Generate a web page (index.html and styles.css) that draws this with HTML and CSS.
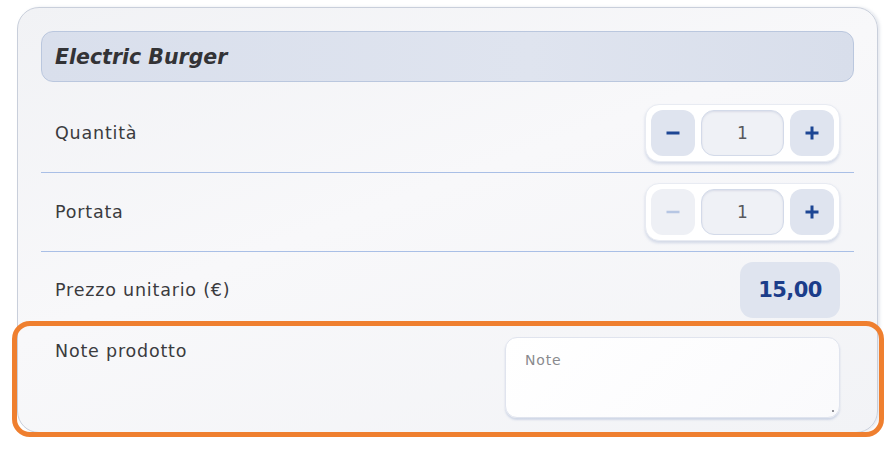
FILE: index.html
```html
<!DOCTYPE html>
<html lang="it">
<head>
<meta charset="utf-8">
<link rel="stylesheet" href="styles.css">
</head>
<body>
<div class="page">
  <div class="card">
    <div class="card-header">Electric Burger</div>
    <div class="row row-first">
      <span class="label">Quantità</span>
      <div class="stepper">
        <button class="step-btn"><svg width="16" height="16" viewBox="0 0 16 16"><path d="M1.5 8h13" stroke="#1d4694" stroke-width="3" stroke-linecap="butt"/></svg></button>
        <div class="step-value">1</div>
        <button class="step-btn"><svg width="16" height="16" viewBox="0 0 16 16"><path d="M1.5 8h13M8 1.5v13" stroke="#1d4694" stroke-width="3" stroke-linecap="butt"/></svg></button>
      </div>
    </div>
    <div class="row">
      <span class="label">Portata</span>
      <div class="stepper">
        <button class="step-btn disabled"><svg width="16" height="16" viewBox="0 0 16 16"><path d="M1.5 8h13" stroke="#b6c6e3" stroke-width="2.5" stroke-linecap="butt"/></svg></button>
        <div class="step-value">1</div>
        <button class="step-btn"><svg width="16" height="16" viewBox="0 0 16 16"><path d="M1.5 8h13M8 1.5v13" stroke="#1d4694" stroke-width="3" stroke-linecap="butt"/></svg></button>
      </div>
    </div>
    <div class="row row-last">
      <span class="label">Prezzo unitario (€)</span>
      <div class="price">15,00</div>
    </div>
    <div class="notes-row">
      <span class="label">Note prodotto</span>
      <div class="notes-box"><span class="placeholder">Note</span><span class="grip"></span></div>
    </div>
  </div>
  <div class="highlight"></div>
</div>
</body>
</html>
```
FILE: styles.css
```css
* { box-sizing: border-box; }
html, body { margin: 0; padding: 0; background: #ffffff; }
body {
  font-family: "DejaVu Sans", "Open Sans", sans-serif;
  color: #3a3a3d;
}
.page {
  position: relative;
  width: 896px;
  height: 450px;
  padding: 7px 18px 0 17px;
}
.card {
  width: 861px;
  height: 426px;
  border: 1px solid #c9cfdb;
  border-radius: 22px;
  padding: 23px 23px 0 23px;
  background: linear-gradient(160deg, #f1f2f5 0%, #f8f8fa 45%, #f2f3f6 100%);
  box-shadow: 2px 0 3px rgba(180,188,205,0.35);
}
.card-header {
  height: 51px;
  border: 1px solid #bac7de;
  border-radius: 12px;
  background: linear-gradient(90deg, #d9dfec 0%, #dfe4ef 60%, #d8deeb 100%);
  padding-left: 13px;
  display: flex;
  align-items: center;
  font-weight: 700;
  font-style: italic;
  font-size: 20.5px;
  color: #333336;
}
.row {
  display: flex;
  align-items: center;
  justify-content: space-between;
  padding: 10px 14px 10px 14px;
  border-bottom: 1px solid #a9bfe6;
}
.row-first { margin-top: 12px; }
.row-last { border-bottom: none; }
.label {
  font-size: 17.5px;
  letter-spacing: 0.8px;
  color: #3b3b3e;
}
.stepper {
  display: flex;
  gap: 6px;
  padding: 5px;
  background: #ffffff;
  border: 1px solid #e8ebf2;
  border-radius: 14px;
  box-shadow: 0 2px 3px rgba(120,140,185,0.28);
}
.step-btn {
  width: 44px;
  height: 46px;
  border: none;
  border-radius: 12px;
  background: #dfe4ef;
  display: flex;
  align-items: center;
  justify-content: center;
  padding: 0;
}
.step-btn.disabled { background: #eef0f5; }
.step-value {
  width: 83px;
  height: 46px;
  border: 1px solid #d3dae9;
  border-radius: 13px;
  background: #eff1f6;
  box-shadow: inset 0 1px 2px rgba(150,160,190,0.25);
  display: flex;
  align-items: center;
  justify-content: center;
  font-size: 17px;
  color: #58585c;
}
.price {
  width: 100px;
  height: 56px;
  border-radius: 13px;
  background: #dfe4ef;
  display: flex;
  align-items: center;
  justify-content: center;
  font-size: 21px;
  letter-spacing: -0.6px;
  font-weight: 700;
  color: #1b3d8a;
}
.notes-row {
  display: flex;
  justify-content: space-between;
  align-items: flex-start;
  padding: 9px 14px 0 14px;
}
.notes-row .label { padding-top: 4px; }
.notes-box {
  position: relative;
  width: 335px;
  height: 81px;
  border: 1px solid #e0e4ee;
  border-radius: 12px;
  background: linear-gradient(135deg, #ffffff 0%, #fafafc 100%);
  box-shadow: 0 2px 2px rgba(140,160,200,0.35);
  padding: 12px 19px;
}
.placeholder {
  font-size: 14px;
  letter-spacing: 0.8px;
  color: #8a8a8e;
}
.grip {
  position: absolute;
  right: 5px;
  bottom: 5px;
  width: 2px;
  height: 2px;
  background: #8f9096;
}
.highlight {
  position: absolute;
  left: 12px;
  top: 321px;
  width: 872px;
  height: 116px;
  border: 5px solid #ef7f2f;
  border-radius: 18px;
}
```
